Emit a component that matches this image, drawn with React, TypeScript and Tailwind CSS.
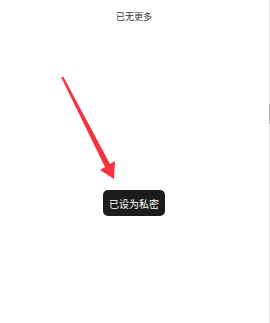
export default function App() {
  return (
    <div
      className="relative h-[323px] w-[270px] overflow-hidden bg-white"
      style={{ fontFamily: '"Noto Sans CJK SC", "Noto Sans", sans-serif' }}
    >
      <div className="flex h-full flex-col items-center border-r border-[#e6e6e6] pr-px">
        <div className="pt-[11px] text-[9px] leading-[12px] text-[#333]">已无更多</div>
        <div className="mt-[167px] flex h-[26px] items-center rounded-[5px] bg-[#1c1c1c] px-[6px] text-[10px] text-white">
          已设为私密
        </div>
      </div>
      <div className="absolute right-0 top-[104px] h-[20px] w-px bg-[#b0b0b0]" />
      <svg className="absolute left-0 top-0" width="270" height="323" viewBox="0 0 270 323">
        <polygon
          points="61,77 63.5,77 110,164 115,161 114,179 100,170 105,167"
          fill="#f5333f"
        />
      </svg>
    </div>
  );
}
